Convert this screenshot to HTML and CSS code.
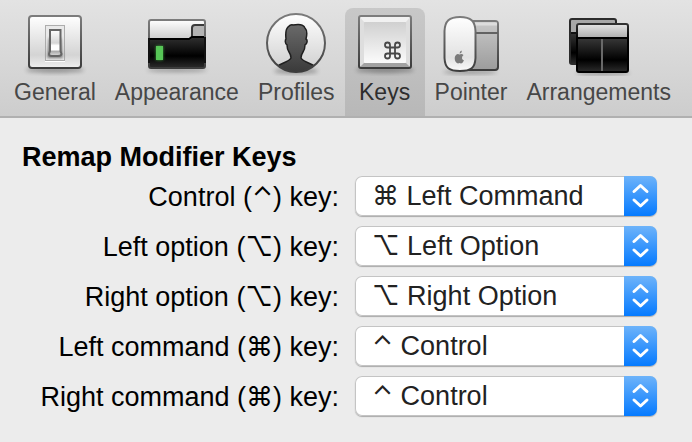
FILE: index.html
```html
<!DOCTYPE html>
<html lang="en">
<head>
<meta charset="utf-8">
<title>Preferences</title>
<link rel="stylesheet" href="styles.css">
</head>
<body>
<svg class="defs" aria-hidden="true">
  <defs>
    <linearGradient id="frame" x1="0" y1="0" x2="0" y2="1"><stop offset="0" stop-color="#7c7c7c"/><stop offset="1" stop-color="#3c3c3c"/></linearGradient>
    <linearGradient id="plate" x1="0" y1="0" x2="0" y2="1"><stop offset="0" stop-color="#fff"/><stop offset=".75" stop-color="#d4d4d4"/><stop offset="1" stop-color="#f0f0f0"/></linearGradient>
    <linearGradient id="mouse" x1="0" y1="0" x2="0" y2="1"><stop offset="0" stop-color="#fff"/><stop offset=".75" stop-color="#e2e2e2"/><stop offset="1" stop-color="#fafafa"/></linearGradient>
    <linearGradient id="paper" x1="0" y1="0" x2="0" y2="1"><stop offset="0" stop-color="#fff"/><stop offset="1" stop-color="#cdcdcd"/></linearGradient>
    <linearGradient id="header" x1="0" y1="0" x2="0" y2="1"><stop offset="0" stop-color="#e6e6e6"/><stop offset="1" stop-color="#adadad"/></linearGradient>
    <linearGradient id="face" x1="0" y1="0" x2="0" y2="1"><stop offset="0" stop-color="#d0d0d0"/><stop offset="1" stop-color="#fbfbfb"/></linearGradient>
    <linearGradient id="lever" x1="0" y1="0" x2="0" y2="1"><stop offset="0" stop-color="#fff"/><stop offset=".5" stop-color="#d6d6d6"/><stop offset=".6" stop-color="#fff"/><stop offset=".76" stop-color="#fff"/><stop offset=".82" stop-color="#aaa"/><stop offset="1" stop-color="#ddd"/></linearGradient>
    <linearGradient id="dark" x1="0" y1="0" x2="0" y2="1"><stop offset="0" stop-color="#5c5c5c"/><stop offset=".75" stop-color="#000"/><stop offset="1" stop-color="#2c2c2c"/></linearGradient>
    <linearGradient id="body" x1="0" y1="0" x2="0" y2="1"><stop offset="0" stop-color="#6a6a6a"/><stop offset="1" stop-color="#383838"/></linearGradient>
    <linearGradient id="grey" x1="0" y1="0" x2="0" y2="1"><stop offset="0" stop-color="#c9c9c9"/><stop offset="1" stop-color="#9c9c9c"/></linearGradient>
    <linearGradient id="blackframe" x1="0" y1="0" x2="0" y2="1"><stop offset="0" stop-color="#333"/><stop offset=".3" stop-color="#000"/></linearGradient>
    <filter id="soft" x="-20%" y="-100%" width="140%" height="300%"><feGaussianBlur stdDeviation="2"/></filter>
    <filter id="glow" x="-60%" y="-60%" width="220%" height="220%"><feGaussianBlur stdDeviation="1.6"/></filter>
    <clipPath id="disc"><circle cx="34" cy="35" r="29"/></clipPath>
  </defs>
</svg>

<nav class="toolbar" aria-label="Preference panes">
  <button class="tab" type="button">
    <svg class="icon" viewBox="0 0 68 68" aria-hidden="true">
      <ellipse cx="34" cy="62" rx="29" ry="3" fill="#000" opacity=".3" filter="url(#soft)"/>
      <rect x="8" y="8" width="52" height="52" rx="3" fill="url(#plate)" stroke="url(#frame)" stroke-width="2"/>
      <rect x="24.500" y="17.500" width="19" height="35" fill="#e9e9e9" stroke="#adadad"/>
      <path d="M24 53.500H44" stroke="#fff"/>
      <path d="M28 30H40L42 50H26Z" fill="#444" opacity=".7" filter="url(#glow)"/>
      <path d="M29 22H39.500V43L40.500 46Q40 48 37 48H31Q28 48 28 46L29 43Z" fill="url(#lever)" stroke="#666" stroke-width="2"/>
    </svg>
    <span>General</span>
  </button>
  <button class="tab" type="button">
    <svg class="icon" viewBox="0 0 68 68" aria-hidden="true">
      <ellipse cx="34" cy="62" rx="30" ry="2" fill="#000" opacity=".3" filter="url(#soft)"/>
      <rect x="6" y="12" width="56" height="48" rx="2" fill="url(#dark)"/>
      <path d="M6 12H62V17H51Q49 17 49 19V28Q49 31 46 31H6Z" fill="url(#paper)"/>
      <path d="M49 29V20Q49 17 52 17H62V29Z" fill="#b4b4b4"/>
      <path d="M6 31H46Q49 31 49 28V20Q49 17 52 17H62" fill="none" stroke="#3a3a3a" stroke-width="2"/>
      <path d="M6 31H46L49 29H62" fill="none" stroke="#000" stroke-width="2"/>
      <rect x="6" y="12" width="56" height="48" rx="2" fill="none" stroke="url(#frame)" stroke-width="2"/>
      <path d="M6 30V55M62 29V55" stroke="#111" stroke-width="2"/>
      <rect x="13" y="38" width="7" height="14" fill="#4dcc4d" opacity=".8" filter="url(#glow)"/>
      <rect x="13" y="38" width="7" height="14" fill="#56c556"/>
    </svg>
    <span>Appearance</span>
  </button>
  <button class="tab" type="button">
    <svg class="icon" viewBox="0 0 68 68" aria-hidden="true">
      <ellipse cx="34" cy="63" rx="22" ry="3" fill="#000" opacity=".3" filter="url(#soft)"/>
      <circle cx="34" cy="35" r="29" fill="url(#paper)"/>
      <path clip-path="url(#disc)" d="M14 59C19 55 27 54 29 50Q29 47 27 44Q25 41 25 37C23 36 23 32 24 31Q23 22 26 19Q29 16 31 17Q41 15 43 20Q46 23 44 31C46 32 45 36 43 37Q43 41 41 44Q39 47 39 50C41 54 49 55 54 59V66H14Z" fill="url(#body)" stroke="#1f1f1f" stroke-width="1.500"/>
      <circle cx="34" cy="35" r="29" fill="none" stroke="url(#frame)" stroke-width="2"/>
    </svg>
    <span>Profiles</span>
  </button>
  <button class="tab tab-active" type="button" aria-current="page">
    <svg class="icon" viewBox="0 0 68 68" aria-hidden="true">
      <ellipse cx="34" cy="62" rx="29" ry="3" fill="#000" opacity=".3" filter="url(#soft)"/>
      <rect x="8" y="8" width="52" height="52" rx="2" fill="#dedede"/>
      <path d="M8 8H60L55 14H13Z" fill="#f1f1f1"/>
      <path d="M8 60H60L55 55H13Z" fill="#a2a2a2"/>
      <rect x="13" y="14" width="42" height="41" rx="1" fill="url(#face)"/>
      <rect x="8" y="8" width="52" height="52" rx="2" fill="none" stroke="url(#frame)" stroke-width="2"/>
      <path d="M39 40V37A2.500 2.500 0 1 0 36.500 39.500H46.500A2.500 2.500 0 1 0 44 37V48A2.500 2.500 0 1 0 46.500 45.500H36.500A2.500 2.500 0 1 0 39 48Z" fill="none" stroke="#484848" stroke-width="1.800"/>
    </svg>
    <span>Keys</span>
  </button>
  <button class="tab" type="button">
    <svg class="icon" viewBox="0 0 68 68" aria-hidden="true">
      <ellipse cx="33" cy="64" rx="27" ry="2" fill="#000" opacity=".3" filter="url(#soft)"/>
      <rect x="24" y="13" width="37" height="49" rx="3" fill="url(#grey)" stroke="url(#frame)" stroke-width="2"/>
      <path d="M38 16H60" stroke="#ddd" stroke-width="3"/>
      <path d="M38 25H61" stroke="#626262" stroke-width="2"/>
      <path d="M23 9C34 9 38 13 38.500 23V50C38 60 34 63 23 63C12 63 8 60 7.500 50V23C8 13 12 9 23 9Z" fill="url(#mouse)" stroke="url(#frame)" stroke-width="2"/>
      <path d="M22.500 46.500C24 45.500 25.500 46 26.500 47Q24.500 48.500 25 50.500Q25.500 52 27 52.500Q25.500 55.500 24 55.500L22.500 55L21 55.500C18 55 16.500 49.500 19 47Q20.500 45.500 22.500 46.500ZM22.500 45.500Q22.500 43 25 42.500Q25 45 22.500 45.500Z" fill="#7b7b7b"/>
    </svg>
    <span>Pointer</span>
  </button>
  <button class="tab" type="button">
    <svg class="icon" viewBox="0 0 68 68" aria-hidden="true">
      <ellipse cx="38" cy="65" rx="27" ry="2" fill="#000" opacity=".3" filter="url(#soft)"/>
      <rect x="5" y="11" width="46" height="45" rx="2" fill="url(#dark)"/>
      <path d="M5 11H51V25H5Z" fill="#a8a8a8"/>
      <path d="M5 25H20" stroke="#111" stroke-width="2"/>
      <rect x="5" y="11" width="46" height="45" rx="2" fill="none" stroke="#2b2b2b" stroke-width="2"/>
      <rect x="12" y="16" width="51" height="48" rx="2" fill="url(#dark)"/>
      <path d="M12 16H63V30H12Z" fill="url(#header)"/>
      <path d="M12 30H63" stroke="#000" stroke-width="2"/>
      <path d="M37 31V64" stroke="#696969" stroke-width="2"/>
      <rect x="12" y="16" width="51" height="48" rx="2" fill="none" stroke="url(#blackframe)" stroke-width="2"/>
    </svg>
    <span>Arrangements</span>
  </button>
</nav>

<main class="pane">
  <h1 class="title">Remap Modifier Keys</h1>
  <form class="keys">
    <label for="control">Control (⌃) key:</label>
    <div class="popup">
      <select id="control"><option>⌘ Left Command</option></select>
      <svg class="arrows" viewBox="0 0 33 40" aria-hidden="true"><path d="M10 15.500L16.500 9.500L23 15.500M10 24L16.500 30L23 24"/></svg>
    </div>
    <label for="left-option">Left option (⌥) key:</label>
    <div class="popup">
      <select id="left-option"><option>⌥ Left Option</option></select>
      <svg class="arrows" viewBox="0 0 33 40" aria-hidden="true"><path d="M10 15.500L16.500 9.500L23 15.500M10 24L16.500 30L23 24"/></svg>
    </div>
    <label for="right-option">Right option (⌥) key:</label>
    <div class="popup">
      <select id="right-option"><option>⌥ Right Option</option></select>
      <svg class="arrows" viewBox="0 0 33 40" aria-hidden="true"><path d="M10 15.500L16.500 9.500L23 15.500M10 24L16.500 30L23 24"/></svg>
    </div>
    <label for="left-command">Left command (⌘) key:</label>
    <div class="popup">
      <select id="left-command"><option>⌃ Control</option></select>
      <svg class="arrows" viewBox="0 0 33 40" aria-hidden="true"><path d="M10 15.500L16.500 9.500L23 15.500M10 24L16.500 30L23 24"/></svg>
    </div>
    <label for="right-command">Right command (⌘) key:</label>
    <div class="popup">
      <select id="right-command"><option>⌃ Control</option></select>
      <svg class="arrows" viewBox="0 0 33 40" aria-hidden="true"><path d="M10 15.500L16.500 9.500L23 15.500M10 24L16.500 30L23 24"/></svg>
    </div>
  </form>
</main>
</body>
</html>
```
FILE: styles.css
```css
* {
  box-sizing: border-box;
}

body {
  margin: 0;
  background: #ececec;
  color: #000;
  font-family: "Liberation Sans", Inter, "DejaVu Sans", sans-serif;
  font-size: 27px;
}

.defs {
  position: absolute;
  width: 0;
  height: 0;
}

.toolbar {
  display: flex;
  gap: 1px;
  padding: 8px 5px 0;
  border-bottom: 2px solid #b0b0b0;
  background: linear-gradient(#e3e3e3, #cdcdcd);
}

.tab {
  display: flex;
  flex-direction: column;
  align-items: center;
  min-width: 80px;
  height: 108px;
  padding: 0 9px;
  border: 0;
  border-radius: 8px 8px 0 0;
  background: none;
  color: #474747;
  font-family: inherit;
  font-size: 23px;
  line-height: 32px;
}

.tab-active {
  background: linear-gradient(#c8c8c8, #b8b8b8);
  color: #2e2e2e;
}

.icon {
  width: 68px;
  height: 68px;
  margin: 0 -4px;
  flex: none;
}

.pane {
  padding: 22px 35px 24px 22px;
}

.title {
  margin: 0 0 2px;
  font-size: 27px;
  line-height: 34px;
}

.keys {
  display: grid;
  grid-template-columns: 317px 1fr;
  gap: 10px 16px;
  line-height: 42px;
}

.keys label {
  height: 40px;
  text-align: right;
  white-space: nowrap;
}

.popup {
  display: grid;
  grid-template-columns: 1fr 33px;
  height: 40px;
  border-radius: 7px;
  background: #fff;
  box-shadow: 0 1px 1px #aaa, inset 0 0 0 1px #c4c4c4;
}

.popup select {
  grid-area: 1 / 1 / 2 / 3;
  appearance: none;
  height: 40px;
  margin: 0;
  padding: 0 33px 0 17px;
  border: 0;
  background: none;
  color: #222;
  font: inherit;
  line-height: 40px;
}

.arrows {
  grid-area: 1 / 2 / 2 / 3;
  width: 33px;
  height: 40px;
  border-radius: 0 7px 7px 0;
  background: linear-gradient(#6db3fa, #057aff);
  pointer-events: none;
}

.arrows path {
  fill: none;
  stroke: #fff;
  stroke-width: 3;
  stroke-linecap: round;
  stroke-linejoin: round;
}
```
